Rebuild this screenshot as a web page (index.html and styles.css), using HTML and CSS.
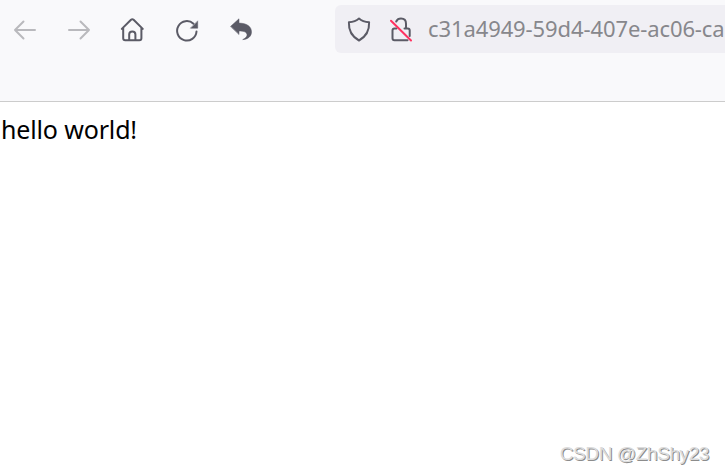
FILE: index.html
```html
<!DOCTYPE html>
<html lang="en">
<head>
    <meta charset="UTF-8">
    <title>hello world</title>
    <link rel="stylesheet" href="styles.css">
</head>
<body>

    <div class="toolbar">
        <div class="nav-buttons">
            <svg class="icon disabled" viewBox="0 0 28 28"><path d="M24 14H4M12.5 5.500L4 14l8.500 8.500"/></svg>
            <svg class="icon disabled" viewBox="0 0 28 28"><path d="M4 14h20M15.500 5.500L24 14l-8.500 8.500"/></svg>
            <svg class="icon" viewBox="0 0 28 28"><path d="M2.800 12.900L12 3.800q1.300-1.100 2.600 0l9.200 9.100M4.200 12v10.200q0 2 2 2h14.200q2 0 2-2V12M10.200 24v-5.500q0-3 3.100-3t3.100 3V24"/></svg>
            <svg class="icon" viewBox="0 0 28 28"><path d="M20.500 7.800A9.700 9.700 0 1 0 23.500 15.500"/><path class="solid" d="M24.700 5.200v7h-7z"/></svg>
            <svg class="icon" viewBox="0 0 28 28"><path class="solid" d="M3.700 10.300L12 2.800v4.300c8 0 12.500 3.700 12.500 8.800 0 4.300-3.300 7.300-8.800 7.700 3.300-1.500 4.600-3.200 4.300-5-.4-2.500-3-3.600-8-3.600v3.200z"/></svg>
        </div>
        <div class="url-bar">
            <svg class="icon" viewBox="0 0 28 28"><path d="M14 3.500c-2.500 2.300-6 3.500-10.100 3.800-.4 8.500 2.800 14.200 10.100 18.200 7.300-4 10.500-9.700 10.100-18.200C20 7 16.500 5.800 14 3.500z"/></svg>
            <svg class="icon lock" viewBox="0 0 28 28"><path d="M9.200 6.500C10.300 4.300 12 3.600 14 3.600c3.200 0 5 2.200 5 5.200v4.700M17.500 13.500h3.200q2 0 2 2v5.500M9.500 13.500H7.500q-2 0-2 2v7.700q0 2 2 2h13"/><path class="slash" d="M4 5.700L24 25.500"/></svg>
            <span class="url">c31a4949-59d4-407e-ac06-ca</span>
        </div>
    </div>

    <div class="content">hello world!</div>

    <div class="watermark">CSDN @ZhShy23</div>

</body>
</html>
```

FILE: styles.css
```css
* { box-sizing: border-box; margin: 0; padding: 0; }
body {
    display: flex;
    flex-direction: column;
    height: 474px;
    overflow: hidden;
    background: #fff;
    font-family: "Noto Sans", "Open Sans", sans-serif;
}
.toolbar {
    display: flex;
    align-items: flex-start;
    height: 102px;
    padding: 5px 0 0 11px;
    background: #f9f9fb;
    border-bottom: 1px solid #cccccc;
}
.nav-buttons {
    display: flex;
    align-items: center;
    gap: 26px;
    width: 324px;
    height: 50px;
    flex-shrink: 0;
}
.icon {
    width: 28px;
    height: 28px;
    flex-shrink: 0;
    fill: none;
    stroke: #5b5b66;
    stroke-width: 2;
    stroke-linecap: round;
    stroke-linejoin: round;
}
.icon .solid {
    fill: #5b5b66;
    stroke-width: 0.5;
}
.disabled {
    stroke: #b9b9bd;
}
.url-bar {
    display: flex;
    align-items: center;
    flex: 1;
    height: 48px;
    padding-left: 10px;
    background: #f0eff4;
    border-radius: 6px 0 0 6px;
    overflow: hidden;
}
.lock {
    margin-left: 14px;
}
.icon .slash {
    stroke: #ff3361;
}
.url {
    margin-left: 13px;
    padding-bottom: 2px;
    font-size: 22px;
    line-height: 46px;
    letter-spacing: -0.1px;
    color: #87878c;
    white-space: nowrap;
}
.content {
    flex: 1;
    padding: 10px 1px;
    font-size: 25px;
    line-height: 34px;
    letter-spacing: -0.15px;
    color: #000;
}
.watermark {
    align-self: flex-end;
    padding: 0 16px 9px 0;
    font-family: "Liberation Sans", Arial, sans-serif;
    font-size: 19px;
    line-height: 23px;
    letter-spacing: -0.4px;
    color: #dcdcdc;
    text-shadow: 1px 1px 0 #8c8c8c;
}
```
